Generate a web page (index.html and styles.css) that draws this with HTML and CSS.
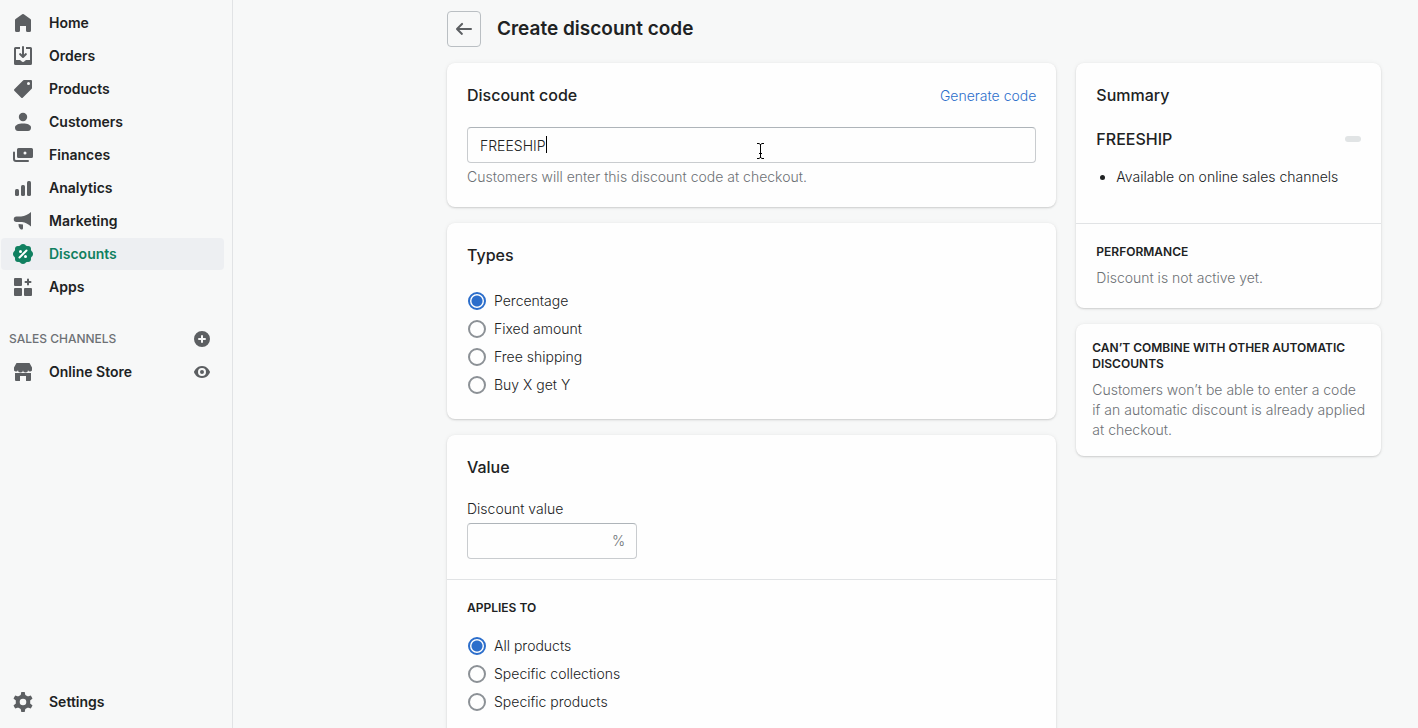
FILE: index.html
```html
<!DOCTYPE html>
<html lang="en">

<head>
  <meta charset="UTF-8">
  <meta name="viewport" content="width=device-width, initial-scale=1.0">
  <title>Create discount code</title>
  <link rel="stylesheet" href="styles.css">
</head>

<body>
  <div class="app">
    <!-- Sidebar -->
    <nav class="sidebar">
      <ul class="nav-list">
        <li>
          <a class="nav-item" href="#">
            <svg class="icon" viewBox="0 0 20 20"><path d="M18 7.3V17.5a1.5 1.5 0 0 1-1.5 1.5h-2a1.5 1.5 0 0 1-1.5-1.5V13H7v4.5A1.5 1.5 0 0 1 5.5 19h-2A1.5 1.5 0 0 1 2 17.5V7.3A1.5 1.5 0 0 1 2.6 6l6.6-4.8a1.5 1.5 0 0 1 1.6 0L17.4 6a1.5 1.5 0 0 1 .6 1.3z"/></svg>
            <span>Home</span>
          </a>
        </li>
        <li>
          <a class="nav-item" href="#">
            <svg class="icon" viewBox="0 0 20 20"><path d="M11 1a1 1 0 1 0-2 0v7.6L7.7 7.3a1 1 0 0 0-1.4 1.4l3 3a1 1 0 0 0 1.4 0l3-3a1 1 0 0 0-1.4-1.4L11 8.6z"/><path d="M3 14V3h4V1H2.5A1.5 1.5 0 0 0 1 2.5v15A1.5 1.5 0 0 0 2.5 19h15a1.5 1.5 0 0 0 1.5-1.5v-15A1.5 1.5 0 0 0 17.5 1H13v2h4v11h-3.5c-.8 0-1.4.7-2 1.3A2 2 0 0 1 10 16a2 2 0 0 1-1.5-.7C7.9 14.7 7.3 14 6.5 14z"/></svg>
            <span>Orders</span>
          </a>
        </li>
        <li>
          <a class="nav-item" href="#">
            <svg class="icon" viewBox="0 0 20 20"><path fill-rule="evenodd" d="M10.3 1.3A1 1 0 0 1 11 1h7a1 1 0 0 1 1 1v7a1 1 0 0 1-.3.7l-9 9a1 1 0 0 1-1.4 0l-7-7a1 1 0 0 1 0-1.4zM15.5 6a1.5 1.5 0 1 0 0-3 1.5 1.5 0 0 0 0 3z"/></svg>
            <span>Products</span>
          </a>
        </li>
        <li>
          <a class="nav-item" href="#">
            <svg class="icon" viewBox="0 0 20 20"><circle cx="10" cy="5" r="4.2"/><path d="M2 15.5C2 13 5.5 11.5 10 11.5s8 1.5 8 4c0 2-1 3.5-3 3.5H5c-2 0-3-1.5-3-3.5z"/></svg>
            <span>Customers</span>
          </a>
        </li>
        <li>
          <a class="nav-item" href="#">
            <svg class="icon" viewBox="0 0 20 20"><path fill-rule="evenodd" d="M5.5 3h13A1.5 1.5 0 0 1 20 4.5v7a1.5 1.5 0 0 1-1.5 1.5h-13A1.5 1.5 0 0 1 4 11.5v-7A1.5 1.5 0 0 1 5.5 3zM12 9.5a1.5 1.5 0 1 0 0-3 1.5 1.5 0 0 0 0 3z"/><path d="M1 7.5V14a2 2 0 0 0 2 2h12" class="stroke"/></svg>
            <span>Finances</span>
          </a>
        </li>
        <li>
          <a class="nav-item" href="#">
            <svg class="icon" viewBox="0 0 20 20"><rect x="2" y="11" width="4" height="7" rx="1.5"/><rect x="8" y="7" width="4" height="11" rx="1.5"/><rect x="14" y="3" width="4" height="15" rx="1.5"/></svg>
            <span>Analytics</span>
          </a>
        </li>
        <li>
          <a class="nav-item" href="#">
            <svg class="icon" viewBox="0 0 20 20"><path d="M18 1v14.5c-3-2.5-5.500-4-9-4.500H3.500a2.700 2.700 0 0 1 0-5.500H8C12 5 15 3.500 18 1z"/><path d="M5.500 13l4.500.5V17c0 1-.5 1.500-1.500 1.500-1.500 0-3-2.500-3-5.500z"/></svg>
            <span>Marketing</span>
          </a>
        </li>
        <li>
          <a class="nav-item active" href="#" aria-current="page">
            <svg class="icon" viewBox="0 0 20 20">
              <circle cx="10" cy="10" r="9"/>
              <circle cx="10" cy="3" r="3"/><circle cx="15" cy="5" r="3"/><circle cx="17" cy="10" r="3"/><circle cx="15" cy="15" r="3"/>
              <circle cx="10" cy="17" r="3"/><circle cx="5" cy="15" r="3"/><circle cx="3" cy="10" r="3"/><circle cx="5" cy="5" r="3"/>
              <path d="M6.5 13.5l7-7" class="percent"/><circle cx="7.5" cy="7.5" r="1.5" class="hole"/><circle cx="12.5" cy="12.5" r="1.5" class="hole"/>
            </svg>
            <span>Discounts</span>
          </a>
        </li>
        <li>
          <a class="nav-item" href="#">
            <svg class="icon" viewBox="0 0 20 20"><rect x="1" y="1" width="8" height="8" rx="1"/><rect x="1" y="11" width="8" height="8" rx="1"/><rect x="11" y="11" width="8" height="8" rx="1"/><path d="M15 2.5v5M12.5 5h5" class="stroke"/></svg>
            <span>Apps</span>
          </a>
        </li>
      </ul>

      <div class="nav-heading">
        <h2>SALES CHANNELS</h2>
        <button type="button" class="icon-btn" aria-label="Add sales channel">
          <svg class="icon" viewBox="0 0 20 20"><path fill-rule="evenodd" d="M2 10a8 8 0 1 1 16 0 8 8 0 0 1-16 0zm9-3a1 1 0 1 0-2 0v2H7a1 1 0 1 0 0 2h2v2a1 1 0 1 0 2 0v-2h2a1 1 0 1 0 0-2h-2z"/></svg>
        </button>
      </div>
      <div class="nav-row">
        <a class="nav-item" href="#">
          <svg class="icon" viewBox="0 0 20 20"><path d="M3.5 1h13L19 5.5V7a2 2 0 0 1-4 1 2.5 2.5 0 0 1-5 0 2.5 2.5 0 0 1-5 0 2 2 0 0 1-4-1V5.5z"/><path d="M2 11h16v7a1 1 0 0 1-1 1h-4v-5H7v5H3a1 1 0 0 1-1-1z"/></svg>
          <span>Online Store</span>
        </a>
        <button type="button" class="icon-btn" aria-label="View your online store">
          <svg class="icon" viewBox="0 0 20 20"><path fill-rule="evenodd" d="M17.9 9.6C17.8 9.4 15.6 4 10 4S2.2 9.4 2.1 9.6a1 1 0 0 0 0 .8C2.200 10.600 4.400 16 10 16s7.800-5.400 7.900-5.600a1 1 0 0 0 0-.8zM10 14a4 4 0 1 1 0-8 4 4 0 0 1 0 8zm0-6a2 2 0 1 0 0 4 2 2 0 0 0 0-4z"/></svg>
        </button>
      </div>

      <a class="nav-item settings" href="#">
        <svg class="icon" viewBox="0 0 20 20">
          <circle cx="10" cy="10" r="5.3" class="ring"/>
          <g id="teeth"><path d="M8.3 0h3.4l.8 4h-5zM8.3 20h3.4l.8-4h-5z"/></g>
          <use href="#teeth" transform="rotate(60 10 10)"/>
          <use href="#teeth" transform="rotate(120 10 10)"/>
        </svg>
        <span>Settings</span>
      </a>
    </nav>

    <!-- Page -->
    <main class="page">
      <header class="page-header">
        <button type="button" class="back-btn" aria-label="Back">
          <svg class="icon" viewBox="0 0 20 20"><path d="M17 9H5.4l3.3-3.3a1 1 0 1 0-1.4-1.4l-5 5a1 1 0 0 0 0 1.4l5 5a1 1 0 0 0 1.4-1.4L5.4 11H17a1 1 0 1 0 0-2z"/></svg>
        </button>
        <h1>Create discount code</h1>
      </header>

      <div class="columns">
        <form class="column primary">
          <section class="card">
            <div class="card-section">
              <div class="card-header">
                <h2><label for="code">Discount code</label></h2>
                <a href="#">Generate code</a>
              </div>
              <div class="field">
                <input type="text" id="code" value="FREESHIP" aria-describedby="codeHelp">
                <span class="caret"></span>
                <svg class="pointer" viewBox="0 0 9 16"><path d="M1 .5h2l1.5 1 1.5-1h2M1 15.5h2l1.5-1 1.5 1h2M4.5 1v14M3 10.5h3"/></svg>
              </div>
              <p class="help" id="codeHelp">Customers will enter this discount code at checkout.</p>
            </div>
          </section>

          <section class="card">
            <div class="card-section">
              <div class="card-header">
                <h2>Types</h2>
              </div>
              <label class="choice"><input type="radio" name="type" checked> Percentage</label>
              <label class="choice"><input type="radio" name="type"> Fixed amount</label>
              <label class="choice"><input type="radio" name="type"> Free shipping</label>
              <label class="choice"><input type="radio" name="type"> Buy X get Y</label>
            </div>
          </section>

          <section class="card">
            <div class="card-section">
              <div class="card-header">
                <h2>Value</h2>
              </div>
              <label class="field-label" for="value">Discount value</label>
              <div class="field value-field">
                <input type="text" id="value">
                <span class="suffix">%</span>
              </div>
            </div>
            <div class="card-section">
              <h3 class="applies">APPLIES TO</h3>
              <label class="choice"><input type="radio" name="applies" checked> All products</label>
              <label class="choice"><input type="radio" name="applies"> Specific collections</label>
              <label class="choice"><input type="radio" name="applies"> Specific products</label>
            </div>
          </section>
        </form>

        <aside class="column secondary">
          <section class="card">
            <div class="card-section summary">
              <div class="card-header">
                <h2>Summary</h2>
              </div>
              <div class="summary-code">
                <h2>FREESHIP</h2>
                <span class="badge"></span>
              </div>
              <ul>
                <li>Available on online sales channels</li>
              </ul>
            </div>
            <div class="card-section">
              <h3>PERFORMANCE</h3>
              <p class="subdued">Discount is not active yet.</p>
            </div>
          </section>

          <section class="card">
            <div class="card-section compact">
              <h3>CAN’T COMBINE WITH OTHER AUTOMATIC DISCOUNTS</h3>
              <p class="subdued">Customers won’t be able to enter a code<br> if an automatic discount is already applied at checkout.</p>
            </div>
          </section>
        </aside>
      </div>
    </main>
  </div>
</body>

</html>
```
FILE: styles.css
```css
* {
  box-sizing: border-box;
}

body {
  margin: 0;
  font-family: Inter, "Liberation Sans", sans-serif;
  font-size: 14px;
  font-weight: 350;
  line-height: 20px;
  color: #202223;
  background-color: #f7f8f8;
}

h1,
h2,
h3,
p,
ul {
  margin: 0;
}

h1 {
  font-size: 19px;
  line-height: 28px;
  font-weight: 600;
}

h2 {
  font-size: 16px;
  line-height: 24px;
  font-weight: 550;
}

h3 {
  font-size: 12px;
  line-height: 16px;
  font-weight: 600;
  margin-bottom: 8px;
}

a {
  color: #2c6ecb;
  text-decoration: none;
}

button {
  padding: 0;
  border: none;
  background: none;
  cursor: pointer;
}

.icon {
  display: block;
  flex: none;
  width: 20px;
  height: 20px;
  fill: #5c5f62;
}

.icon .stroke {
  fill: none;
  stroke: #5c5f62;
  stroke-width: 2;
  stroke-linecap: round;
}

.app {
  display: flex;
  height: 100vh;
}

/* Sidebar */
.sidebar {
  display: flex;
  flex-direction: column;
  flex: none;
  width: 233px;
  padding: 7px 8px 10px 1px;
  border-right: 1px solid #e1e3e5;
}

.nav-list {
  padding: 0;
  list-style: none;
}

.nav-list li {
  margin-bottom: 1px;
}

.nav-item {
  display: flex;
  align-items: center;
  flex: 1;
  gap: 16px;
  height: 32px;
  padding-left: 12px;
  border-radius: 4px;
  font-weight: 600;
  color: #202223;
}

.nav-item.active {
  background-color: #edeff2;
  color: #108060;
}

.nav-item.active .icon {
  fill: #108060;
}

.icon .percent {
  fill: none;
  stroke: #fff;
  stroke-width: 2;
  stroke-linecap: round;
}

.icon .hole {
  fill: #fff;
}

.icon .ring {
  fill: none;
  stroke: #5c5f62;
  stroke-width: 4;
}

.nav-heading,
.nav-row {
  display: flex;
  align-items: center;
  justify-content: space-between;
  height: 32px;
  padding-right: 12px;
}

.nav-heading {
  margin: 19px 0 1px;
  padding-left: 8px;
}

.nav-heading h2 {
  font-size: 12px;
  line-height: 16px;
  font-weight: 500;
  color: #6d7175;
}

.settings {
  flex: none;
  margin-top: auto;
}

/* Page */
.page {
  flex: 1;
  min-width: 0;
  padding: 11px 37px 0 214px;
  overflow-y: auto;
  scrollbar-width: none;
}

.page-header {
  display: flex;
  align-items: center;
  gap: 16px;
  margin-bottom: 16px;
}

.back-btn {
  display: flex;
  align-items: center;
  justify-content: center;
  width: 34px;
  height: 36px;
  border: 1px solid #babfc3;
  border-radius: 4px;
}

.columns {
  display: flex;
  align-items: flex-start;
  gap: 20px;
}

.column {
  display: flex;
  flex-direction: column;
  gap: 16px;
  min-width: 0;
}

.primary {
  flex: 2;
}

.secondary {
  flex: 1;
}

.card {
  background-color: #fefefe;
  border-radius: 8px;
  box-shadow: 0 0 5px rgba(23, 24, 24, 0.05), 0 1px 2px rgba(0, 0, 0, 0.15);
}

.card-section {
  padding: 20px;
}

.card-section + .card-section {
  border-top: 1px solid #e1e3e5;
}

.card-section.summary {
  padding-bottom: 36px;
}

.card-section.compact {
  padding: 16px 8px 16px 16px;
}

.card-header {
  display: flex;
  align-items: baseline;
  justify-content: space-between;
  margin-bottom: 20px;
}

/* Form */
.field {
  position: relative;
  margin-bottom: 4px;
}

.field input {
  display: block;
  width: 100%;
  height: 36px;
  padding: 0 12px;
  border: 1px solid #c9cccf;
  border-top-color: #aeb4b9;
  border-radius: 4px;
  background-color: #fefefe;
  font: inherit;
  color: #202223;
}

.field-label {
  display: block;
  margin-bottom: 4px;
}

.value-field {
  width: 170px;
  margin-bottom: 0;
}

.suffix {
  position: absolute;
  top: 8px;
  right: 12px;
  color: #6d7175;
}

.caret {
  position: absolute;
  top: 9px;
  left: 79px;
  width: 1px;
  height: 17px;
  background-color: #000;
}

.pointer {
  position: absolute;
  top: 16px;
  left: 289px;
  width: 9px;
  height: 16px;
  fill: none;
  stroke: #000;
}

.help,
.subdued {
  color: #6d7175;
}

.choice {
  display: flex;
  align-items: center;
  gap: 8px;
  height: 28px;
}

.choice input {
  appearance: none;
  width: 18px;
  height: 18px;
  margin: 0 0 0 1px;
  border: 2px solid #8c9196;
  border-radius: 50%;
  background-color: #fefefe;
}

.choice input:checked {
  border-color: #2c6ecb;
  background: radial-gradient(circle, #2c6ecb 5px, #fefefe 6px);
}

.applies {
  margin-bottom: 16px;
}

/* Summary */
.summary-code {
  display: flex;
  align-items: center;
  justify-content: space-between;
  margin-bottom: 16px;
}

.badge {
  width: 16px;
  height: 6px;
  border-radius: 3px;
  background-color: #e1e4e5;
}

.summary ul {
  padding-left: 20px;
}
```
